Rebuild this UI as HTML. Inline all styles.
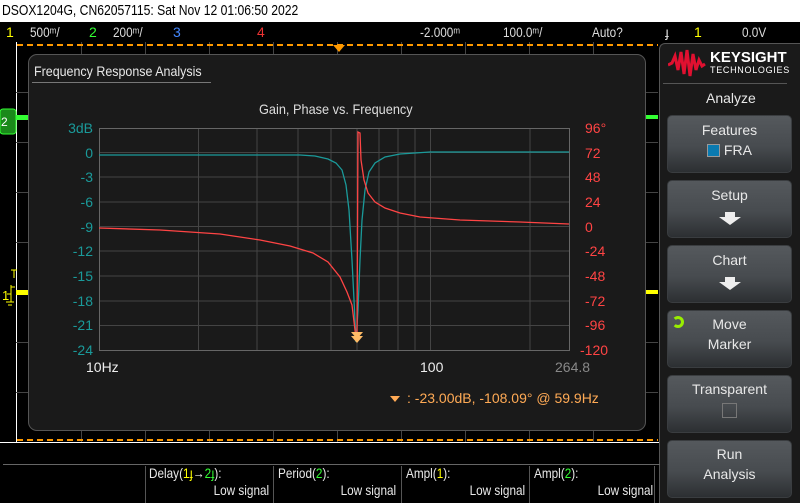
<!DOCTYPE html>
<html><head><meta charset="utf-8"><style>
*{margin:0;padding:0;box-sizing:border-box}
body{width:800px;height:503px;background:#000;position:relative;overflow:hidden;font-family:"Liberation Sans",sans-serif;color:#ddd}
.a{position:absolute;white-space:nowrap}
.n{transform:scaleX(.84);transform-origin:left top}
.r{transform:scaleX(.84);transform-origin:right top;text-align:right}
.btn{position:absolute;left:667px;width:125px;height:58px;border:1px solid #3a3d40;border-radius:5px;background:linear-gradient(#55595d,#474b4f 55%,#2c2f32);color:#e8e8e8;font-size:14px;text-align:center;line-height:20px}
.arr{width:0;height:0;border-left:11px solid transparent;border-right:11px solid transparent;border-top:8px solid #eee;margin:0 auto;position:relative}
.arr:before{content:"";position:absolute;left:-5px;top:-13px;width:10px;height:5px;background:#eee}
</style></head><body>
<div class="a" style="left:0;top:0;width:800px;height:22px;background:#fff"></div>
<div class="a n" style="left:2px;top:0;color:#000;font-size:15px;line-height:22px;transform:scaleX(.81)">DSOX1204G, CN62057115: Sat Nov 12 01:06:50 2022</div>
<div class="a" style="top:22px;left:0;width:800px;height:20px;font-size:14px;line-height:20px;color:#ddd">
<span class="a" style="left:6px;color:#ff0">1</span><span class="a n" style="left:30px">500ᵐ/</span>
<span class="a" style="left:89px;color:#3f3">2</span><span class="a n" style="left:113px">200ᵐ/</span>
<span class="a" style="left:173px;color:#48f">3</span><span class="a" style="left:257px;color:#e33">4</span>
<span class="a n" style="left:420px">-2.000ᵐ</span><span class="a n" style="left:503px">100.0ᵐ/</span>
<span class="a n" style="left:592px">Auto?</span><span class="a" style="left:665px">ɟ</span>
<span class="a" style="left:694px;color:#ff0">1</span><span class="a n" style="left:742px">0.0V</span></div>
<!-- graticule -->
<svg class="a" style="left:0;top:42px" width="660" height="420">
<line x1="16.5" y1="0" x2="16.5" y2="400" stroke="#fff"/>
<line x1="0" y1="400.5" x2="660" y2="400.5" stroke="#fff"/>
<g stroke="#444">
<line x1="81.5" y1="0" x2="81.5" y2="400"/><line x1="145.5" y1="0" x2="145.5" y2="400"/><line x1="209.5" y1="0" x2="209.5" y2="400"/><line x1="273.5" y1="0" x2="273.5" y2="400"/><line x1="337.5" y1="0" x2="337.5" y2="400"/><line x1="401.5" y1="0" x2="401.5" y2="400"/><line x1="465.5" y1="0" x2="465.5" y2="400"/><line x1="529.5" y1="0" x2="529.5" y2="400"/><line x1="593.5" y1="0" x2="593.5" y2="400"/>
<line x1="16" y1="50.5" x2="658" y2="50.5"/><line x1="16" y1="100.5" x2="658" y2="100.5"/><line x1="16" y1="150.5" x2="658" y2="150.5"/><line x1="16" y1="200.5" x2="658" y2="200.5"/><line x1="16" y1="250.5" x2="658" y2="250.5"/><line x1="16" y1="300.5" x2="658" y2="300.5"/><line x1="16" y1="350.5" x2="658" y2="350.5"/>
</g>
<line x1="17" y1="3" x2="658" y2="3" stroke="#f90" stroke-width="2" stroke-dasharray="6,4"/>
<line x1="17" y1="398" x2="658" y2="398" stroke="#f90" stroke-width="2" stroke-dasharray="6,4"/>
<polygon points="333,3 345,3 339,10" fill="#f90"/>
<rect x="16" y="73" width="14" height="5" fill="#3f3"/><rect x="645" y="73" width="13" height="4" fill="#3f3"/>
<rect x="16" y="248" width="14" height="5" fill="#ff0"/><rect x="645" y="248" width="13" height="4" fill="#ff0"/>
<rect x="0" y="67" width="16" height="25" rx="3" fill="#1a8a1a" stroke="#3f3"/>
<text x="1" y="84" font-size="12" fill="#fff" font-family="Liberation Sans">2</text>
<text x="2" y="258" font-size="13" fill="#ff0" font-family="Liberation Sans">1</text>
<path d="M7 252h4v-7h4M6 260h8M8 263h4M11 243v17" stroke="#ff0" fill="none"/>
<path d="M11 228h6M14 228v8" stroke="#ff0"/>
</svg>
<!-- dialog -->
<div class="a" style="left:28px;top:54px;width:618px;height:377px;background:#1a1a1a;border:1px solid #555;border-radius:9px"></div>
<div class="a n" style="left:34px;top:63px;font-size:14px;color:#e8e8e8;transform:scaleX(.89)">Frequency Response Analysis</div>
<div class="a" style="left:32px;top:82px;width:179px;height:1px;background:#777"></div>
<div class="a n" style="left:259px;top:101px;font-size:14px;color:#ddd;transform:scaleX(.91)">Gain, Phase vs. Frequency</div>
<svg class="a" style="left:0;top:0" width="660" height="440" font-family="Liberation Sans,sans-serif" font-size="14">
<g stroke="#444">
<line x1="99" y1="152.5" x2="569" y2="152.5"/><line x1="99" y1="177" x2="569" y2="177"/><line x1="99" y1="202" x2="569" y2="202"/><line x1="99" y1="226.5" x2="569" y2="226.5"/><line x1="99" y1="251" x2="569" y2="251"/><line x1="99" y1="276" x2="569" y2="276"/><line x1="99" y1="301" x2="569" y2="301"/><line x1="99" y1="325.5" x2="569" y2="325.5"/>
<line x1="198.5" y1="128" x2="198.5" y2="350"/><line x1="257" y1="128" x2="257" y2="350"/><line x1="298" y1="128" x2="298" y2="350"/><line x1="331" y1="128" x2="331" y2="350"/><line x1="357" y1="128" x2="357" y2="350"/><line x1="379" y1="128" x2="379" y2="350"/><line x1="398" y1="128" x2="398" y2="350"/><line x1="415" y1="128" x2="415" y2="350"/><line x1="430.5" y1="128" x2="430.5" y2="350"/><line x1="530" y1="128" x2="530" y2="350"/>
</g>
<rect x="99.5" y="128.5" width="470" height="222" fill="none" stroke="#666"/>
<g fill="#1a9a9a" text-anchor="end">
<text x="93" y="133">3dB</text><text x="93" y="158">0</text><text x="93" y="182">-3</text><text x="93" y="207">-6</text><text x="93" y="232">-9</text><text x="93" y="256">-12</text><text x="93" y="281">-15</text><text x="93" y="306">-18</text><text x="93" y="330">-21</text><text x="93" y="355">-24</text></g>
<g fill="#f44">
<text x="585" y="133">96°</text><text x="585" y="158">72</text><text x="585" y="182">48</text><text x="585" y="207">24</text><text x="585" y="232">0</text><text x="585" y="256">-24</text><text x="585" y="281">-48</text><text x="585" y="306">-72</text><text x="585" y="330">-96</text><text x="580" y="355">-120</text></g>
<text x="86" y="372" fill="#eee">10Hz</text><text x="420" y="372" fill="#eee">100</text><text x="555" y="372" fill="#888">264.8</text>
<polyline fill="none" stroke="#1a9a9a" stroke-width="1.3" points="99,155 300,155 315,156 328,159 336,163 342,170 346,185 349,210 352,260 354,300 356,342 358,310 360,260 362,220 365,190 369,172 375,163 385,157 400,154 430,152 569,152"/>
<polyline fill="none" stroke="#f44" stroke-width="1.3" points="99,228 160,230 220,234 260,240 290,246 313,253 328,262 340,277 347,292 352,305 355,330 356,339 357,339 358,132 360,133 361,160 364,180 368,193 375,202 385,208 400,213 420,217 460,220 520,222 569,224"/>
<polygon points="351,332 363,332 357,339" fill="#fb6"/><polygon points="351,336 363,336 357,343" fill="#fb6"/>
<polygon points="390,396 400,396 395,402" fill="#fa5"/>
<text x="407" y="403" fill="#fa5">:  -23.00dB, -108.09° @ 59.9Hz</text>
</svg>
<!-- right panel -->
<div class="a" style="left:659px;top:43px;width:141px;height:460px;background:#1a1a1a;border-left:1px solid #555;border-top:1px solid #555;border-radius:6px 0 0 0"></div>
<svg class="a" style="left:668px;top:48px" width="40" height="30"><path d="M0 17 L4 15 L7 8 L10 22 L13 4 L16 26 L19 2 L22 28 L25 6 L28 22 L31 12 L34 18 L37 16" fill="none" stroke="#e01030" stroke-width="3"/></svg>
<div class="a" style="left:710px;top:49px;font-family:'Liberation Sans';font-weight:bold;font-size:15px;color:#fff">KEYSIGHT</div>
<div class="a" style="left:710px;top:65px;font-family:'Liberation Sans';font-size:9px;letter-spacing:0.7px;color:#fff">TECHNOLOGIES</div>
<div class="a" style="left:663px;top:83px;width:124px;height:1px;background:#555"></div>
<div class="a" style="left:706px;top:90px;font-size:14px;color:#e8e8e8">Analyze</div>
<div class="btn" style="top:115px;padding-top:4px">Features<br><span style="display:inline-block;width:13px;height:13px;background:#0a7ab0;border:1px solid #999;vertical-align:-2px"></span> FRA</div>
<div class="btn" style="top:180px;padding-top:4px">Setup<div class="arr" style="margin-top:12px"></div></div>
<div class="btn" style="top:245px;padding-top:4px">Chart<div class="arr" style="margin-top:12px"></div></div>
<div class="btn" style="top:310px;padding-top:3px">Move<br>Marker</div>
<div class="a" style="left:672px;top:316px;width:12px;height:12px;border:3px solid #9e0;border-radius:50%;border-left-color:transparent"></div>
<div class="btn" style="top:375px;padding-top:3px">Transparent<br><span style="display:inline-block;width:15px;height:15px;border:1px solid #777;margin-top:4px"></span></div>
<div class="btn" style="top:440px;padding-top:3px">Run<br>Analysis</div>
<!-- bottom meas -->
<div class="a" style="left:3px;top:464px;width:657px;height:1px;background:#666"></div>
<div class="a" style="left:145px;top:466px;width:1px;height:37px;background:#555"></div>
<div class="a" style="left:273px;top:466px;width:1px;height:37px;background:#555"></div>
<div class="a" style="left:401px;top:466px;width:1px;height:37px;background:#555"></div>
<div class="a" style="left:529px;top:466px;width:1px;height:37px;background:#555"></div>
<div class="a" style="left:654px;top:466px;width:1px;height:37px;background:#555"></div>
<div style="font-size:14px;color:#e8e8e8">
<span class="a n" style="left:149px;top:465px">Delay(<span style="color:#ff0">1ɟ</span>→<span style="color:#3f3">2ɟ</span>):</span>
<span class="a n" style="left:278px;top:465px">Period(<span style="color:#3f3">2</span>):</span>
<span class="a n" style="left:406px;top:465px">Ampl(<span style="color:#ff0">1</span>):</span>
<span class="a n" style="left:534px;top:465px">Ampl(<span style="color:#3f3">2</span>):</span>
<span class="a r" style="right:531px;top:482px">Low signal</span>
<span class="a r" style="right:404px;top:482px">Low signal</span>
<span class="a r" style="right:275px;top:482px">Low signal</span>
<span class="a r" style="right:147px;top:482px">Low signal</span>
</div>
</body></html>
